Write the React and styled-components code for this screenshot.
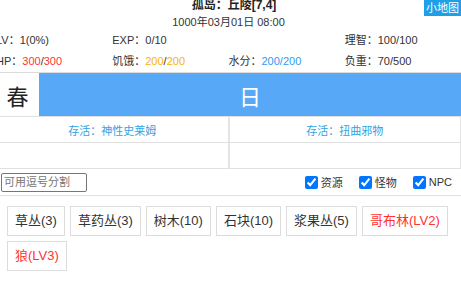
import React from "react";
import styled, { createGlobalStyle } from "styled-components";

const GlobalStyle = createGlobalStyle`
  html, body { margin: 0; padding: 0; background: #fff; overflow: hidden; }
  body {
    font-family: "Liberation Sans", "Noto Sans CJK SC", sans-serif;
    font-size: 11px;
    color: #333;
  }
`;

const Page = styled.div`
  width: 465px;
  margin-left: -4px;
`;

const Header = styled.header`
  position: relative;
  text-align: center;
`;

const Title = styled.div`
  font-size: 12px;
  font-weight: bold;
  line-height: 13px;
  margin-top: -1px;
  padding-left: 11px;
  color: #222;
`;

const DateLine = styled.div`
  font-size: 11px;
  line-height: 14px;
  margin-top: 3px;
  color: #333;
`;

const MapButton = styled.button`
  position: absolute;
  top: 1px;
  right: 0;
  height: 16px;
  padding: 0 2px;
  border: none;
  background: #1ea0e8;
  color: #fff;
  font-family: inherit;
  font-size: 11px;
  line-height: 16px;
`;

const Stats = styled.div`
  display: grid;
  grid-template-columns: repeat(4, 1fr);
  line-height: 21px;
  margin-top: 1px;
`;

const Stat = styled.div`
  white-space: nowrap;
  color: #333;
`;

const Val = styled.span`
  color: ${(p) => p.$color || "inherit"};
`;

const SeasonRow = styled.div`
  display: flex;
  height: 43px;
  border-top: 1px solid #dcdcdc;
`;

const Season = styled.div`
  width: 43px;
  display: flex;
  align-items: center;
  justify-content: center;
  font-size: 22px;
  color: #222;
`;

const Day = styled.div`
  flex: 1;
  background: #58a8f8;
  color: #fff;
  display: flex;
  align-items: center;
  justify-content: center;
  font-size: 22px;
`;

const Board = styled.div`
  display: grid;
  grid-template-columns: 1fr 1fr;
  border-top: 1px solid #e0e0e0;
`;

const Cell = styled.div`
  height: 25px;
  border-bottom: 1px solid #e0e0e0;
  border-left: 1px solid #e4e4e4;
  border-right: 1px solid #e4e4e4;
  display: flex;
  align-items: center;
  justify-content: center;
  color: #2ea3e6;
  font-size: 11px;
`;

const FilterRow = styled.div`
  display: flex;
  align-items: center;
  justify-content: space-between;
  height: 26px;
  padding: 0 9px 0 5px;
  border-bottom: 1px solid #e0e0e0;
`;

const Search = styled.input`
  width: 86px;
  height: 19px;
  box-sizing: border-box;
  border: 1px solid #767676;
  border-radius: 2px;
  padding: 1px 2px;
  font-family: inherit;
  font-size: 11px;
  &::placeholder { color: #757575; }
`;

const Checks = styled.div`
  display: flex;
  align-items: center;
  gap: 12px;
`;

const Check = styled.label`
  display: flex;
  align-items: center;
  font-size: 11px;
  color: #333;
  input {
    margin: 0 3px 0 4px;
    width: 13px;
    height: 13px;
    accent-color: #0075ff;
  }
`;

const Tags = styled.div`
  display: flex;
  flex-wrap: wrap;
  gap: 5px;
  padding: 10px 11px 0 11px;
`;

const Tag = styled.div`
  border: 1px solid #dcdcdc;
  padding: 6px 7px;
  font-size: 13px;
  line-height: 16px;
  color: ${(p) => (p.$danger ? "#ff3333" : "#333")};
  background: #fff;
`;

const tags = [
  { t: "草丛(3)" },
  { t: "草药丛(3)" },
  { t: "树木(10)" },
  { t: "石块(10)" },
  { t: "浆果丛(5)" },
  { t: "哥布林(LV2)", d: true },
  { t: "狼(LV3)", d: true },
];

export default function App() {
  return (
    <>
      <GlobalStyle />
      <Page>
        <Header>
          <Title>孤岛：丘陵[7,4]</Title>
          <DateLine>1000年03月01日 08:00</DateLine>
          <MapButton>小地图</MapButton>
        </Header>
        <Stats>
          <Stat>LV：1(0%)</Stat>
          <Stat>EXP：0/10</Stat>
          <Stat></Stat>
          <Stat>理智：100/100</Stat>
          <Stat>
            HP：<Val $color="#ff3333">300</Val>/<Val $color="#ff3333">300</Val>
          </Stat>
          <Stat>
            饥饿：<Val $color="#f7b500">200</Val>/<Val $color="#f7b500">200</Val>
          </Stat>
          <Stat>
            水分：<Val $color="#3399f3">200/200</Val>
          </Stat>
          <Stat>负重：70/500</Stat>
        </Stats>
        <SeasonRow>
          <Season>春</Season>
          <Day>日</Day>
        </SeasonRow>
        <Board>
          <Cell>存活：神性史莱姆</Cell>
          <Cell>存活：扭曲邪物</Cell>
          <Cell></Cell>
          <Cell></Cell>
        </Board>
        <FilterRow>
          <Search placeholder="可用逗号分割" />
          <Checks>
            <Check><input type="checkbox" defaultChecked />资源</Check>
            <Check><input type="checkbox" defaultChecked />怪物</Check>
            <Check><input type="checkbox" defaultChecked />NPC</Check>
          </Checks>
        </FilterRow>
        <Tags>
          {tags.map((x) => (
            <Tag key={x.t} $danger={x.d}>{x.t}</Tag>
          ))}
        </Tags>
      </Page>
    </>
  );
}
